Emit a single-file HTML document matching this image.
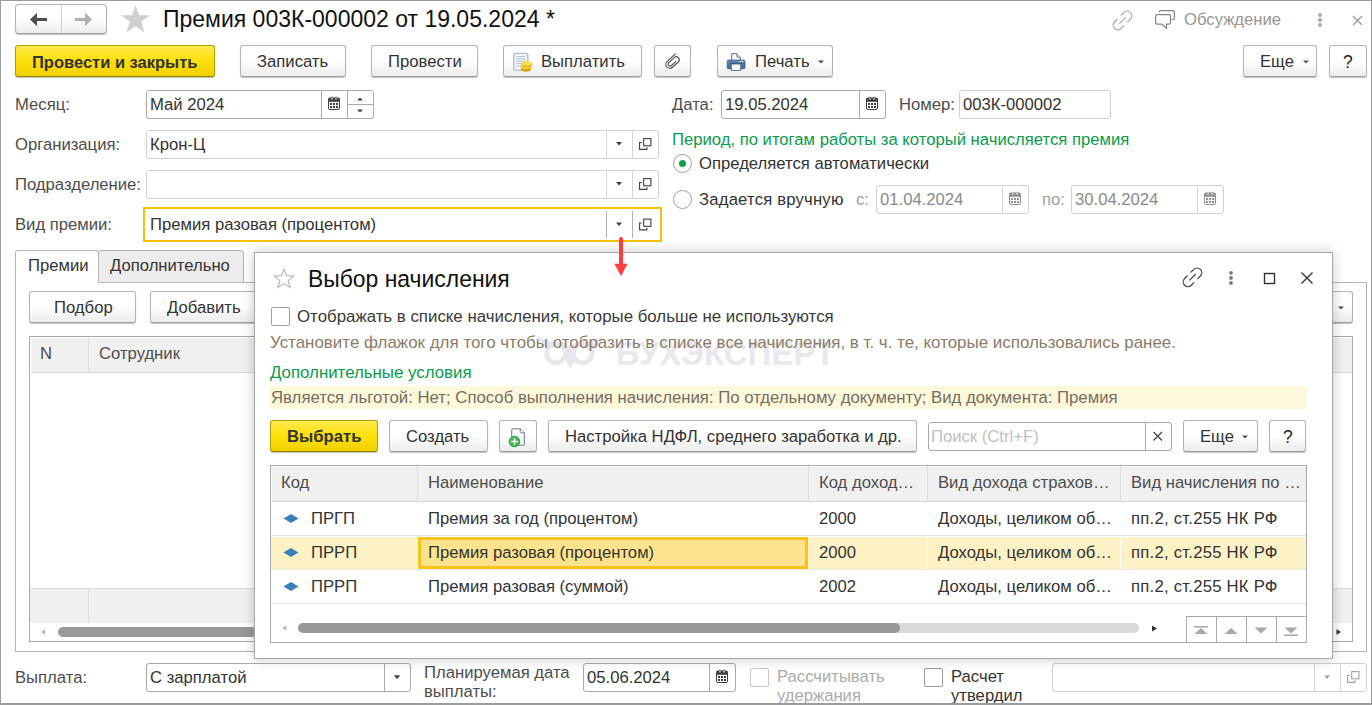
<!DOCTYPE html>
<html><head><meta charset="utf-8">
<style>
*{box-sizing:border-box;margin:0;padding:0}
html,body{width:1372px;height:705px;overflow:hidden;background:#fff}
body{position:relative;font-family:"Liberation Sans",sans-serif;font-size:16.67px;color:#333}
.a{position:absolute}
.t{position:absolute;white-space:nowrap;line-height:22px;font-size:16.67px}
.lbl{color:#4d4d4d}
.btn{position:absolute;border:1px solid #b4b4b4;border-bottom-color:#a0a0a0;border-radius:3px;background:linear-gradient(#fff 0%,#fff 45%,#ececec 100%);box-shadow:0 1px 1px rgba(0,0,0,.25);color:#404040}
.ybtn{position:absolute;border:1px solid #b39d00;border-bottom-color:#948200;border-radius:3px;background:linear-gradient(#ffea4d 0%,#fde00a 50%,#f1d000 100%);box-shadow:0 1px 1px rgba(0,0,0,.25);color:#333;font-weight:bold}
.inp{position:absolute;border:1px solid #a9a9a9;border-radius:3px;background:#fff}
.inpl{position:absolute;border:1px solid #cfcfcf;border-radius:3px;background:#fff}
.vd{position:absolute;width:1px;background:#a9a9a9}
.vdl{position:absolute;width:1px;background:#d5d5d5}
.hd{position:absolute;height:1px;background:#a9a9a9}
svg{position:absolute;overflow:visible}
</style></head><body>

<!-- window frame -->
<div class="a" style="left:0;top:0;width:1372px;height:705px;border-left:1px solid #9c9c9c;border-top:1px solid #9c9c9c;border-right:1px solid #9c9c9c;border-bottom:2px solid #9c9c9c;z-index:50;pointer-events:none"></div>

<!-- HEADER -->
<div class="btn" style="left:15px;top:4px;width:92px;height:30px;border-radius:4px"></div>
<div class="vd" style="left:61px;top:5px;height:28px;background:#d0d0d0"></div>
<svg style="left:0;top:0" width="1" height="1">
  <path d="M30 19.5 L37 12.8 L37 26.2 Z" fill="#505050"/><rect x="36" y="18" width="11" height="3" fill="#505050"/>
  <path d="M92 19.5 L85 12.8 L85 26.2 Z" fill="#b0b0b0"/><rect x="75" y="18" width="11" height="3" fill="#b0b0b0"/>
  <path d="M135.5 5 L139 15.3 L150 15.3 L141.2 21.7 L144.5 32.5 L135.5 26 L126.5 32.5 L129.8 21.7 L121 15.3 L132 15.3 Z" fill="#d0d0d0"/>
</svg>
<div class="t" style="left:163px;top:5px;font-size:23px;line-height:28px;color:#111">Премия 003К-000002 от 19.05.2024 *</div>

<svg style="left:0;top:0" width="1" height="1">
<g transform="translate(1122.5,20.5) rotate(-45)" fill="none" stroke="#a8a8a8" stroke-width="1.25" stroke-linecap="round"><path d="M2.8 -4.7 H6.45 A4.7 4.7 0 0 1 6.45 4.7 H2.8"/><path d="M-2.8 4.7 H-6.45 A4.7 4.7 0 0 1 -6.45 -4.7 H-2.8"/><path d="M-4 0 H4"/></g>
  <g fill="none" stroke="#858585" stroke-width="1.25" stroke-linejoin="round" stroke-linecap="round">
    <path d="M1157.2 14.6 H1168.9 a1.6 1.6 0 0 1 1.6 1.6 V22.6 a1.6 1.6 0 0 1 -1.6 1.6 H1166.4 V28.4 L1162.1 24.2 H1157.2 a1.6 1.6 0 0 1 -1.6 -1.6 V16.2 a1.6 1.6 0 0 1 1.6-1.6 Z"/>
    <path d="M1159.3 11.9 a1.4 1.4 0 0 1 1.4 -1.4 H1172.7 a1.6 1.6 0 0 1 1.6 1.6 V18 a1.6 1.6 0 0 1 -1.6 1.6 H1172.4"/>
  </g>
</svg>
<div class="t" style="left:1184px;top:9px;color:#969696">Обсуждение</div>
<svg style="left:0;top:0" width="1" height="1">
  <g fill="#a8a8a8"><circle cx="1320" cy="15" r="2"/><circle cx="1320" cy="20" r="2"/><circle cx="1320" cy="25" r="2"/></g>
  <path d="M1353 16 L1362 25 M1362 16 L1353 25" stroke="#999" stroke-width="1.2"/>
</svg>

<!-- TOOLBAR -->
<div class="ybtn" style="left:15px;top:45px;width:200px;height:32px"></div>
<div class="t" style="left:32px;top:51px;font-weight:bold;color:#333;font-size:16.5px">Провести и закрыть</div>
<div class="btn" style="left:240px;top:45px;width:106px;height:32px"></div>
<div class="t" style="left:257px;top:51px">Записать</div>
<div class="btn" style="left:371px;top:45px;width:107px;height:32px"></div>
<div class="t" style="left:388px;top:51px">Провести</div>
<div class="btn" style="left:503px;top:45px;width:139px;height:32px"></div>
<svg style="left:0;top:0" width="1" height="1">
  <rect x="513.8" y="53.4" width="14" height="17" rx="1.3" fill="#f3f6f9" stroke="#aebfcc" stroke-width="1.4"/>
  <g stroke="#b5c1cb" stroke-width="1"><path d="M516.3 56.5 H525.3 M516.3 58.8 H525.3 M516.3 61.2 H525.3 M516.3 63.6 H523 M516.3 66 H521"/></g>
  <ellipse cx="526" cy="69" rx="5.3" ry="2.8" fill="#d9a513"/>
  <rect x="520.7" y="66" width="10.6" height="3" fill="#e9bb22"/>
  <ellipse cx="526" cy="66" rx="5.3" ry="2.6" fill="#f6d44a"/>
  <ellipse cx="527" cy="64.6" rx="5.3" ry="2.6" fill="#e2b21c"/>
  <ellipse cx="527" cy="63.3" rx="5.2" ry="2.4" fill="#f8dc5a"/>
</svg>
<div class="t" style="left:541px;top:51px">Выплатить</div>
<div class="btn" style="left:654px;top:45px;width:37px;height:32px"></div>
<svg style="left:0;top:0" width="1" height="1">
  <g transform="translate(669.8,64.3) rotate(-42)"><path d="M11 -4 H0 A4 4 0 0 0 0 4 H7.85 A3 3 0 0 0 7.85 -2 H0.5 A2 2 0 0 0 0.5 2 H6.3" fill="none" stroke="#555" stroke-width="1.15" stroke-linecap="round"/></g>
</svg>
<div class="btn" style="left:717px;top:45px;width:116px;height:32px"></div>
<svg style="left:0;top:0" width="1" height="1">
  <path d="M731.7 53.7 H736.8 L740.4 57.3 V60.5 H731.7 Z" fill="#fff" stroke="#5b6f88" stroke-width="1"/>
  <path d="M736.8 53.7 V56.3 a1 1 0 0 0 1 1 H740.4" fill="#dfe6ee" stroke="#5b6f88" stroke-width="0.9"/>
  <defs><linearGradient id="prg" x1="0" y1="0" x2="0" y2="1"><stop offset="0" stop-color="#6a8cb8"/><stop offset="1" stop-color="#3f6391"/></linearGradient></defs>
  <path d="M728.6 60 H743.6 a1.4 1.4 0 0 1 1.4 1.4 V67.4 a1.4 1.4 0 0 1 -1.4 1.4 H728.6 a1.4 1.4 0 0 1 -1.4 -1.4 V61.4 a1.4 1.4 0 0 1 1.4 -1.4 Z" fill="url(#prg)" stroke="#3d5f8c" stroke-width="0.8"/>
  <circle cx="740.4" cy="61.6" r="0.75" fill="#fff"/><circle cx="742.5" cy="61.6" r="0.75" fill="#fff"/>
  <path d="M730 63.4 H742.5" stroke="#2f4f7a" stroke-width="1"/>
  <path d="M731.3 64 H740.8 L740.6 70.4 H731.5 Z" fill="#fff" stroke="#5b6f88" stroke-width="1"/>
</svg>
<div class="t" style="left:755px;top:51px">Печать</div>
<svg style="left:0;top:0" width="1" height="1"><path d="M818 60.5 H824 L821 63.5 Z" fill="#505050"/></svg>

<div class="btn" style="left:1243px;top:45px;width:74px;height:32px"></div>
<div class="t" style="left:1260px;top:51px">Еще</div>
<svg style="left:0;top:0" width="1" height="1"><path d="M1303 60.5 H1309 L1306 63.5 Z" fill="#505050"/></svg>
<div class="btn" style="left:1329px;top:45px;width:38px;height:32px"></div>
<div class="t" style="left:1343px;top:50.5px;color:#222;font-size:17.5px">?</div>

<!-- FORM -->
<div class="t lbl" style="left:15px;top:94px">Месяц:</div>
<div class="inp" style="left:146px;top:90px;width:228px;height:29px"></div>
<div class="vd" style="left:321px;top:91px;height:27px"></div>
<div class="vd" style="left:347px;top:91px;height:27px"></div>
<div class="hd" style="left:347px;top:104px;width:26px"></div>
<div class="t" style="left:150px;top:94px;color:#333">Май 2024</div>

<div class="t lbl" style="left:672px;top:94px">Дата:</div>
<div class="inp" style="left:721px;top:90px;width:165px;height:29px"></div>
<div class="vd" style="left:859px;top:91px;height:27px"></div>
<div class="t" style="left:725px;top:94px;color:#333">19.05.2024</div>
<div class="t lbl" style="left:899px;top:94px">Номер:</div>
<div class="inpl" style="left:959px;top:90px;width:152px;height:29px"></div>
<div class="t" style="left:963px;top:94px;color:#333">003К-000002</div>

<div class="t lbl" style="left:15px;top:134px">Организация:</div>
<div class="inpl" style="left:146px;top:130px;width:513px;height:29px"></div>
<div class="vdl" style="left:606px;top:131px;height:27px"></div>
<div class="vdl" style="left:632px;top:131px;height:27px"></div>
<div class="t" style="left:150px;top:134px;color:#333">Крон-Ц</div>

<div class="t" style="left:672px;top:129px;color:#099b4c">Период, по итогам работы за который начисляется премия</div>
<div class="a" style="left:673px;top:154px;width:19px;height:19px;border:1px solid #a0a0a0;border-radius:50%"></div>
<div class="a" style="left:679px;top:160px;width:7px;height:7px;background:#159c48;border-radius:50%"></div>
<div class="t" style="left:699px;top:153px;color:#333">Определяется автоматически</div>

<div class="t lbl" style="left:15px;top:174px">Подразделение:</div>
<div class="inpl" style="left:146px;top:170px;width:513px;height:29px"></div>
<div class="vdl" style="left:606px;top:171px;height:27px"></div>
<div class="vdl" style="left:632px;top:171px;height:27px"></div>

<div class="a" style="left:673px;top:190px;width:19px;height:19px;border:1px solid #a0a0a0;border-radius:50%"></div>
<div class="t" style="left:699px;top:189px;color:#333;letter-spacing:0.2px">Задается вручную</div>
<div class="t" style="left:856px;top:189px;color:#a0a0a0">с:</div>
<div class="inpl" style="left:876px;top:185px;width:153px;height:29px"></div>
<div class="vdl" style="left:1002px;top:186px;height:27px"></div>
<div class="t" style="left:880px;top:189px;color:#8a8a8a">01.04.2024</div>
<div class="t" style="left:1042px;top:189px;color:#a0a0a0">по:</div>
<div class="inpl" style="left:1071px;top:185px;width:153px;height:29px"></div>
<div class="vdl" style="left:1197px;top:186px;height:27px"></div>
<div class="t" style="left:1075px;top:189px;color:#8a8a8a">30.04.2024</div>

<div class="t lbl" style="left:15px;top:214px">Вид премии:</div>
<div class="a" style="left:143px;top:207px;width:519px;height:35px;border:2px solid #f6c108;background:#fff"></div>
<div class="vdl" style="left:606px;top:211px;height:27px;background:#b0b0b0"></div>
<div class="vdl" style="left:632px;top:211px;height:27px;background:#b0b0b0"></div>
<div class="t" style="left:150px;top:214px;color:#333">Премия разовая (процентом)</div>

<!-- icons for fields -->
<svg style="left:0;top:0;z-index:5" width="1" height="1"><g transform="translate(328,97)"><path d="M0.5 2.5 a1.5 1.5 0 0 1 1.5-1.5 H10 a1.5 1.5 0 0 1 1.5 1.5 V11 a1.5 1.5 0 0 1 -1.5 1.5 H2 a1.5 1.5 0 0 1 -1.5-1.5 Z" fill="#fff" stroke="#404040" stroke-width="1"/><rect x="0.5" y="1" width="11" height="3.8" fill="#404040"/><rect x="3" y="0" width="2" height="3" rx="1" fill="#fff" stroke="#404040" stroke-width="0.8"/><rect x="7" y="0" width="2" height="3" rx="1" fill="#fff" stroke="#404040" stroke-width="0.8"/><g fill="#404040"><rect x="2" y="6" width="2" height="2"/><rect x="5" y="6" width="2" height="2"/><rect x="8" y="6" width="2" height="2"/><rect x="2" y="9" width="2" height="2"/><rect x="5" y="9" width="2" height="2"/><rect x="8" y="9" width="2" height="2"/></g></g><g transform="translate(866,97)"><path d="M0.5 2.5 a1.5 1.5 0 0 1 1.5-1.5 H10 a1.5 1.5 0 0 1 1.5 1.5 V11 a1.5 1.5 0 0 1 -1.5 1.5 H2 a1.5 1.5 0 0 1 -1.5-1.5 Z" fill="#fff" stroke="#404040" stroke-width="1"/><rect x="0.5" y="1" width="11" height="3.8" fill="#404040"/><rect x="3" y="0" width="2" height="3" rx="1" fill="#fff" stroke="#404040" stroke-width="0.8"/><rect x="7" y="0" width="2" height="3" rx="1" fill="#fff" stroke="#404040" stroke-width="0.8"/><g fill="#404040"><rect x="2" y="6" width="2" height="2"/><rect x="5" y="6" width="2" height="2"/><rect x="8" y="6" width="2" height="2"/><rect x="2" y="9" width="2" height="2"/><rect x="5" y="9" width="2" height="2"/><rect x="8" y="9" width="2" height="2"/></g></g><g transform="translate(1009,192)"><path d="M0.5 2.5 a1.5 1.5 0 0 1 1.5-1.5 H10 a1.5 1.5 0 0 1 1.5 1.5 V11 a1.5 1.5 0 0 1 -1.5 1.5 H2 a1.5 1.5 0 0 1 -1.5-1.5 Z" fill="#fff" stroke="#909090" stroke-width="1"/><rect x="0.5" y="1" width="11" height="3.8" fill="#909090"/><rect x="3" y="0" width="2" height="3" rx="1" fill="#fff" stroke="#909090" stroke-width="0.8"/><rect x="7" y="0" width="2" height="3" rx="1" fill="#fff" stroke="#909090" stroke-width="0.8"/><g fill="#909090"><rect x="2" y="6" width="2" height="2"/><rect x="5" y="6" width="2" height="2"/><rect x="8" y="6" width="2" height="2"/><rect x="2" y="9" width="2" height="2"/><rect x="5" y="9" width="2" height="2"/><rect x="8" y="9" width="2" height="2"/></g></g><g transform="translate(1204,192)"><path d="M0.5 2.5 a1.5 1.5 0 0 1 1.5-1.5 H10 a1.5 1.5 0 0 1 1.5 1.5 V11 a1.5 1.5 0 0 1 -1.5 1.5 H2 a1.5 1.5 0 0 1 -1.5-1.5 Z" fill="#fff" stroke="#909090" stroke-width="1"/><rect x="0.5" y="1" width="11" height="3.8" fill="#909090"/><rect x="3" y="0" width="2" height="3" rx="1" fill="#fff" stroke="#909090" stroke-width="0.8"/><rect x="7" y="0" width="2" height="3" rx="1" fill="#fff" stroke="#909090" stroke-width="0.8"/><g fill="#909090"><rect x="2" y="6" width="2" height="2"/><rect x="5" y="6" width="2" height="2"/><rect x="8" y="6" width="2" height="2"/><rect x="2" y="9" width="2" height="2"/><rect x="5" y="9" width="2" height="2"/><rect x="8" y="9" width="2" height="2"/></g></g><g transform="translate(716,670)"><path d="M0.5 2.5 a1.5 1.5 0 0 1 1.5-1.5 H10 a1.5 1.5 0 0 1 1.5 1.5 V11 a1.5 1.5 0 0 1 -1.5 1.5 H2 a1.5 1.5 0 0 1 -1.5-1.5 Z" fill="#fff" stroke="#404040" stroke-width="1"/><rect x="0.5" y="1" width="11" height="3.8" fill="#404040"/><rect x="3" y="0" width="2" height="3" rx="1" fill="#fff" stroke="#404040" stroke-width="0.8"/><rect x="7" y="0" width="2" height="3" rx="1" fill="#fff" stroke="#404040" stroke-width="0.8"/><g fill="#404040"><rect x="2" y="6" width="2" height="2"/><rect x="5" y="6" width="2" height="2"/><rect x="8" y="6" width="2" height="2"/><rect x="2" y="9" width="2" height="2"/><rect x="5" y="9" width="2" height="2"/><rect x="8" y="9" width="2" height="2"/></g></g><path d="M357 100.5 H363 L360 97.5 Z" fill="#404040"/><path d="M357 109.5 H363 L360 112.5 Z" fill="#404040"/><path d="M616 142 H622 L619 145.6 Z" fill="#404040"/><path d="M616 182 H622 L619 185.6 Z" fill="#404040"/><path d="M616 222.5 H622 L619 226.1 Z" fill="#404040"/><path d="M394 675.5 H400 L397 679.1 Z" fill="#404040"/><path d="M1324 675.5 H1330 L1327 679.1 Z" fill="#a0a0a0"/><g transform="translate(639,138)" fill="none" stroke="#404040" stroke-width="1.1"><rect x="4.7" y="0.6" width="7.2" height="7.2"/><path d="M2.8 4.5 H0.6 V11.4 H7.9 V9.2"/></g><g transform="translate(639,178)" fill="none" stroke="#404040" stroke-width="1.1"><rect x="4.7" y="0.6" width="7.2" height="7.2"/><path d="M2.8 4.5 H0.6 V11.4 H7.9 V9.2"/></g><g transform="translate(639,218.5)" fill="none" stroke="#404040" stroke-width="1.1"><rect x="4.7" y="0.6" width="7.2" height="7.2"/><path d="M2.8 4.5 H0.6 V11.4 H7.9 V9.2"/></g><g transform="translate(1347,671)" fill="none" stroke="#a0a0a0" stroke-width="1.1"><rect x="4.7" y="0.6" width="7.2" height="7.2"/><path d="M2.8 4.5 H0.6 V11.4 H7.9 V9.2"/></g></svg>

<!-- TABS / background panel -->
<div class="a" style="left:15px;top:282px;width:1352px;height:370px;border:1px solid #b4b4b4;border-top:none"></div>
<div class="hd" style="left:243px;top:282px;width:1124px;background:#b4b4b4"></div>
<div class="a" style="left:15px;top:250px;width:84px;height:33px;border:1px solid #b4b4b4;border-bottom:none;border-radius:3px 3px 0 0;background:#fff"></div>
<div class="a" style="left:98px;top:250px;width:146px;height:33px;border:1px solid #b4b4b4;border-radius:3px 3px 0 0;background:#ececec"></div>
<div class="t" style="left:28px;top:255px;color:#333">Премии</div>
<div class="t" style="left:110px;top:255px;color:#333">Дополнительно</div>

<div class="btn" style="left:29px;top:291px;width:107px;height:32px"></div>
<div class="t" style="left:54px;top:297px">Подбор</div>
<div class="btn" style="left:150px;top:291px;width:120px;height:32px"></div>
<div class="t" style="left:167px;top:297px">Добавить</div>
<div class="btn" style="left:1290px;top:291px;width:63px;height:32px"></div>
<svg style="left:0;top:0" width="1" height="1"><path d="M1338 306.5 H1344 L1341 309.5 Z" fill="#505050"/></svg>

<div class="a" style="left:29px;top:336px;width:1324px;height:306px;border:1px solid #a8a8a8;background:#fff"></div>
<div class="a" style="left:31px;top:338px;width:1321px;height:35px;background:#f0f0f0;border-bottom:1px solid #d4d4d4"></div>
<div class="vd" style="left:88px;top:338px;height:34px;background:#dcdcdc"></div>
<div class="t" style="left:40px;top:343px;color:#4d4d4d">N</div>
<div class="t" style="left:99px;top:343px;color:#4d4d4d">Сотрудник</div>
<div class="a" style="left:30px;top:588px;width:1322px;height:35px;background:#f0f0f0;border-top:1px solid #dcdcdc"></div>
<div class="vd" style="left:88px;top:589px;height:34px;background:#dcdcdc"></div>
<div class="a" style="left:58px;top:627px;width:1200px;height:10px;border-radius:5px;background:#9a9a9a"></div>
<svg style="left:0;top:0" width="1" height="1"><path d="M41 632 L45 629.5 V634.5 Z" fill="#b0b0b0"/><path d="M1341 632 L1336.5 629 V635 Z" fill="#333"/></svg>

<!-- BOTTOM ROW -->
<div class="t lbl" style="left:15px;top:667px">Выплата:</div>
<div class="inp" style="left:146px;top:663px;width:265px;height:29px"></div>
<div class="vd" style="left:384px;top:664px;height:27px"></div>
<div class="t" style="left:150px;top:667px;color:#333">С зарплатой</div>
<svg style="left:0;top:0" width="1" height="1"><path d="M394 675.5 H400 L397 678.5 Z" fill="#505050"/></svg>
<div class="t lbl" style="left:424px;top:662px">Планируемая дата</div>
<div class="t lbl" style="left:424px;top:681px">выплаты:</div>
<div class="inp" style="left:583px;top:663px;width:153px;height:29px"></div>
<div class="vd" style="left:709px;top:664px;height:27px"></div>
<div class="t" style="left:587px;top:667px;color:#333">05.06.2024</div>
<div class="a" style="left:750px;top:668px;width:19px;height:19px;border:1px solid #c8c8c8;border-radius:2px"></div>
<div class="t" style="left:777px;top:666px;color:#ababab">Рассчитывать</div>
<div class="t" style="left:777px;top:684.5px;color:#ababab">удержания</div>
<div class="a" style="left:924px;top:668px;width:19px;height:19px;border:1px solid #9a9a9a;border-radius:2px"></div>
<div class="t" style="left:951px;top:666px;color:#333">Расчет</div>
<div class="t" style="left:951px;top:684.5px;color:#333">утвердил</div>
<div class="inpl" style="left:1052px;top:663px;width:315px;height:29px"></div>
<div class="vdl" style="left:1314px;top:664px;height:27px"></div>
<div class="vdl" style="left:1340px;top:664px;height:27px"></div>

<!-- DIALOG -->
<div id="dlg" class="a" style="left:254px;top:252px;width:1079px;height:407px;border:1px solid #a8a8a8;background:#fff;box-shadow:0 0 12px rgba(0,0,0,.22);z-index:10">
</div>
<div class="a" style="left:0;top:0;width:1372px;height:705px;z-index:11">
<svg style="left:0;top:0" width="1" height="1">
  <path d="M284 269 L286.6 275.6 L293.8 276 L288.2 280.6 L290.1 287.5 L284 283.6 L277.9 287.5 L279.8 280.6 L274.2 276 L281.4 275.6 Z" fill="none" stroke="#b8b8b8" stroke-width="1.1" stroke-linejoin="miter"/>
</svg>
<div class="t" style="left:307.5px;top:265px;font-size:24.5px;line-height:28px;color:#111;transform:scaleX(0.935);transform-origin:0 0">Выбор начисления</div>
<svg style="left:0;top:0" width="1" height="1">
<g transform="translate(1192.5,277.3) rotate(-45)" fill="none" stroke="#444" stroke-width="1.25" stroke-linecap="round"><path d="M2.8 -4.7 H6.45 A4.7 4.7 0 0 1 6.45 4.7 H2.8"/><path d="M-2.8 4.7 H-6.45 A4.7 4.7 0 0 1 -6.45 -4.7 H-2.8"/><path d="M-4 0 H4"/></g>
  <g fill="#777"><circle cx="1231" cy="272.8" r="1.9"/><circle cx="1231" cy="277.9" r="1.9"/><circle cx="1231" cy="283" r="1.9"/></g>
  <rect x="1264.5" y="273.5" width="10" height="10" fill="none" stroke="#333" stroke-width="1.4"/>
  <path d="M1301.5 272.5 L1312.5 283.5 M1312.5 272.5 L1301.5 283.5" stroke="#333" stroke-width="1.4"/>
</svg>

<div class="a" style="left:271px;top:307px;width:19px;height:19px;border:1px solid #a0a0a0;border-radius:2px"></div>
<div class="t" style="left:297px;top:306px;color:#3a3a3a;font-size:16.85px">Отображать в списке начисления, которые больше не используются</div>

<!-- watermark -->
<svg style="left:0;top:0" width="1" height="1">
  <g fill="#e7e7ed">
    <path d="M537 336 L549 341.5 L556 342 L563 342 L570 346 L577 342 L584 342 L591 341.5 L603 336 L597 346.5 L592 347 L577 347 L570 351 L563 347 L548 347 L543 346.5 Z"/>
    <path d="M564 349 L576.5 349 L575 360 L570.3 369 L565.5 360 Z"/>
  </g>
  <circle cx="556" cy="353.5" r="9.3" fill="none" stroke="#e7e7ed" stroke-width="4.8"/>
  <circle cx="582.5" cy="353.5" r="9.3" fill="none" stroke="#e7e7ed" stroke-width="4.8"/>
</svg>
<div class="t" style="left:616px;top:336px;font-size:32.3px;line-height:36px;font-weight:bold;color:#e8e8ee;letter-spacing:0.5px">БУХЭКСПЕРТ</div>

<div class="t" style="left:270px;top:332px;color:#8a7c68;font-size:16.95px">Установите флажок для того чтобы отобразить в списке все начисления, в т. ч. те, которые использовались ранее.</div>
<div class="t" style="left:270px;top:362px;color:#099b4c;font-size:16.85px">Дополнительные условия</div>
<div class="a" style="left:270px;top:386px;width:1037px;height:23px;background:#fdf8dc"></div>
<div class="t" style="left:271px;top:387px;color:#766e5e;font-size:16.75px">Является льготой: Нет; Способ выполнения начисления: По отдельному документу; Вид документа: Премия</div>

<div class="ybtn" style="left:270px;top:420px;width:108px;height:32px"></div>
<div class="t" style="left:287px;top:426px;font-weight:bold;color:#333">Выбрать</div>
<div class="btn" style="left:389px;top:420px;width:99px;height:32px"></div>
<div class="t" style="left:406px;top:426px">Создать</div>
<div class="btn" style="left:499px;top:420px;width:38px;height:32px"></div>
<svg style="left:0;top:0" width="1" height="1">
  <path d="M512.9 428.8 H520.2 L524.3 432.9 V444 a1.2 1.2 0 0 1 -1.2 1.2 H512.9 a1.2 1.2 0 0 1 -1.2 -1.2 V430 a1.2 1.2 0 0 1 1.2 -1.2 Z" fill="#fafafa" stroke="#6b7d91" stroke-width="1.05"/>
  <path d="M520.2 428.8 V431.6 a1.2 1.2 0 0 0 1.2 1.2 H524.3" fill="#fff" stroke="#6b7d91" stroke-width="1"/>
  <circle cx="514.5" cy="441.5" r="5.3" fill="#45b552" stroke="#1e9a2f" stroke-width="0.9"/>
  <path d="M514.5 438.1 V444.9 M511.1 441.5 H517.9" stroke="#fff" stroke-width="1.3"/>
</svg>
<div class="btn" style="left:548px;top:420px;width:369px;height:32px"></div>
<div class="t" style="left:565px;top:426px">Настройка НДФЛ, среднего заработка и др.</div>
<div class="inp" style="left:928px;top:422px;width:244px;height:29px"></div>
<div class="vd" style="left:1145px;top:423px;height:27px"></div>
<div class="t" style="left:931px;top:426px;color:#c0c0c0">Поиск (Ctrl+F)</div>
<svg style="left:0;top:0" width="1" height="1"><path d="M1153.5 432 L1162 440.5 M1162 432 L1153.5 440.5" stroke="#444" stroke-width="1.3"/></svg>
<div class="btn" style="left:1183px;top:420px;width:75px;height:32px"></div>
<div class="t" style="left:1200px;top:426px">Еще</div>
<svg style="left:0;top:0" width="1" height="1"><path d="M1242 435.5 H1248 L1245 438.5 Z" fill="#505050"/></svg>
<div class="btn" style="left:1269px;top:420px;width:37px;height:32px"></div>
<div class="t" style="left:1283px;top:425.5px;color:#222;font-size:17.5px">?</div>

<!-- table -->
<div class="a" style="left:270px;top:465px;width:1037px;height:178px;border:1px solid #a8a8a8;background:#fff"></div>
<div class="a" style="left:272px;top:467px;width:1034px;height:35px;background:#f0f0f0;border-bottom:1px solid #d4d4d4"></div>
<div class="vd" style="left:417px;top:466px;height:35px;background:#dcdcdc"></div>
<div class="vd" style="left:808px;top:466px;height:35px;background:#dcdcdc"></div>
<div class="vd" style="left:927px;top:466px;height:35px;background:#dcdcdc"></div>
<div class="vd" style="left:1120px;top:466px;height:35px;background:#dcdcdc"></div>
<div class="t" style="left:281px;top:472px;color:#4d4d4d">Код</div>
<div class="t" style="left:428px;top:472px;color:#4d4d4d">Наименование</div>
<div class="t" style="left:819px;top:472px;color:#4d4d4d">Код доход…</div>
<div class="t" style="left:938px;top:472px;color:#4d4d4d">Вид дохода страхов…</div>
<div class="t" style="left:1131px;top:472px;color:#4d4d4d">Вид начисления по …</div>

<div class="hd" style="left:271px;top:535px;width:1035px;background:#e6e6e6"></div>
<div class="a" style="left:271px;top:537px;width:1035px;height:32px;background:#fdf1c6"></div>
<div class="hd" style="left:271px;top:569px;width:1035px;background:#e6e6e6"></div>
<div class="hd" style="left:271px;top:603px;width:1035px;background:#e6e6e6"></div>
<div class="vd" style="left:417px;top:537px;height:32px;background:#fff"></div>
<div class="vd" style="left:927px;top:537px;height:32px;background:#fff"></div>
<div class="vd" style="left:1120px;top:537px;height:32px;background:#fff"></div>
<div class="a" style="left:418px;top:537px;width:390px;height:32px;background:#fde38e;border:3px solid #f7c519"></div>

<svg style="left:0;top:0" width="1" height="1">
  <g fill="#3a7fb7">
    <path d="M283.5 518.5 L291 514 L298.5 518.5 L291 523 Z"/>
    <path d="M283.5 552.5 L291 548 L298.5 552.5 L291 557 Z"/>
    <path d="M283.5 586.5 L291 582 L298.5 586.5 L291 591 Z"/>
  </g>
</svg>
<div class="t" style="left:311px;top:508px">ПРГП</div>
<div class="t" style="left:428px;top:508px">Премия за год (процентом)</div>
<div class="t" style="left:819px;top:508px">2000</div>
<div class="t" style="left:938px;top:508px">Доходы, целиком об…</div>
<div class="t" style="left:1131px;top:508px;letter-spacing:0.25px">пп.2, ст.255 НК РФ</div>
<div class="t" style="left:311px;top:542px">ПРРП</div>
<div class="t" style="left:428px;top:542px">Премия разовая (процентом)</div>
<div class="t" style="left:819px;top:542px">2000</div>
<div class="t" style="left:938px;top:542px">Доходы, целиком об…</div>
<div class="t" style="left:1131px;top:542px;letter-spacing:0.25px">пп.2, ст.255 НК РФ</div>
<div class="t" style="left:311px;top:576px">ПРРП</div>
<div class="t" style="left:428px;top:576px">Премия разовая (суммой)</div>
<div class="t" style="left:819px;top:576px">2002</div>
<div class="t" style="left:938px;top:576px">Доходы, целиком об…</div>
<div class="t" style="left:1131px;top:576px;letter-spacing:0.25px">пп.2, ст.255 НК РФ</div>

<div class="a" style="left:298px;top:623px;width:841px;height:10px;border-radius:5px;background:#d9d9d9"></div>
<div class="a" style="left:298px;top:623px;width:602px;height:10px;border-radius:5px;background:#989898"></div>
<svg style="left:0;top:0" width="1" height="1"><path d="M282 628 L286.5 625.5 V630.5 Z" fill="#b8b8b8"/><path d="M1157 628.5 L1152 625.5 V631.5 Z" fill="#333"/></svg>
<div class="a" style="left:1186px;top:616px;width:121px;height:27px;border:1px solid #a8a8a8;border-right:none;border-bottom:none"></div>
<div class="vd" style="left:1216px;top:617px;height:25px"></div>
<div class="vd" style="left:1246px;top:617px;height:25px"></div>
<div class="vd" style="left:1276px;top:617px;height:25px"></div>
<svg style="left:0;top:0" width="1" height="1">
  <g fill="#a8a8a8">
    <rect x="1194" y="626" width="14" height="1.5"/><path d="M1194.5 634 L1201 628 L1207.5 634 Z"/>
    <path d="M1224.5 634 L1231 628 L1237.5 634 Z"/>
    <path d="M1254.5 627.5 L1261 633.5 L1267.5 627.5 Z"/>
    <path d="M1284.5 627.5 L1291 633.5 L1297.5 627.5 Z"/><rect x="1284" y="634.5" width="14" height="1.5"/>
  </g>
</svg>
</div>

<!-- red arrow -->
<svg style="left:0;top:0;z-index:20" width="1" height="1">
  <rect x="619" y="237" width="4" height="30" rx="2" fill="#fe3d40"/>
  <path d="M614.8 264 H627.2 L621 275.5 Z" fill="#fe3d40" stroke="#fe3d40" stroke-width="0.6" stroke-linejoin="round"/>
</svg>

</body></html>
